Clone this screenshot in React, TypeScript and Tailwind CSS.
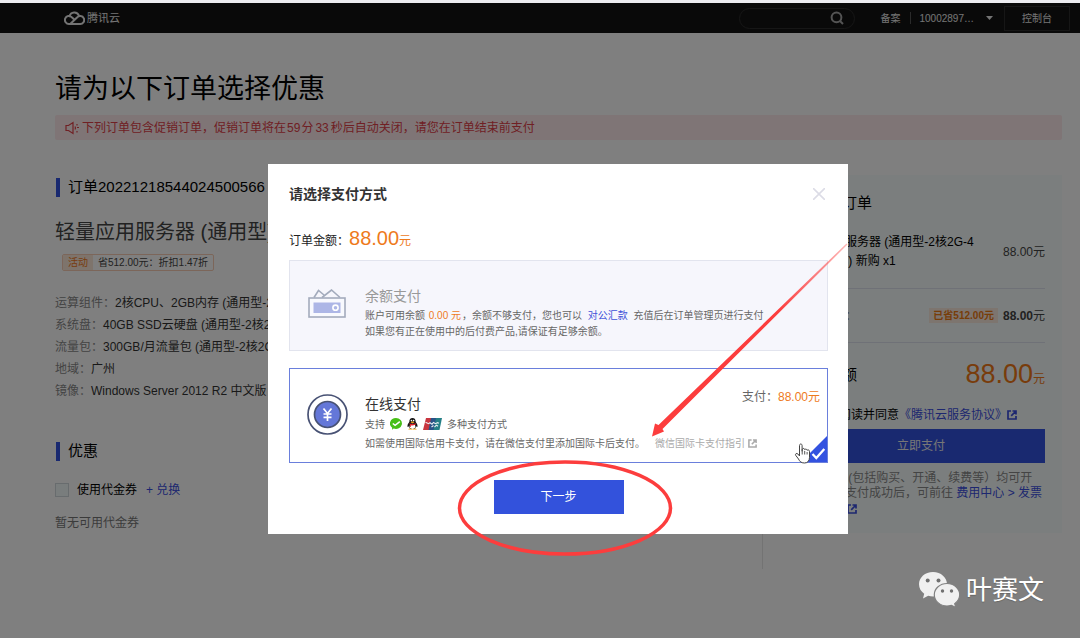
import { useState } from "react";

const specs = [
  { label: "运算组件：", value: "2核CPU、2GB内存 (通用型-2核2G)" },
  { label: "系统盘：", value: "40GB SSD云硬盘 (通用型-2核2G)" },
  { label: "流量包：", value: "300GB/月流量包 (通用型-2核2G)" },
  { label: "地域：", value: "广州" },
  { label: "镜像：", value: "Windows Server 2012 R2 中文版" },
];

function ExternalIcon({ className }: { className: string }) {
  return (
    <svg className={className} viewBox="0 0 10 10" fill="none" stroke="currentColor" strokeWidth="1.7">
      <path d="M4 1H1v8h8V6M5.500 1H9v3.500M9 1L4.200 5.800" />
    </svg>
  );
}

function Header() {
  return (
    <header className="bg-[#131313] h-[30px] pl-16 pr-[10px] flex items-center justify-between text-[10px] text-[#e8e8e8]">
      <a href="#" className="flex items-center gap-0.5 text-[11px]">
        <svg className="w-[21px] h-4" viewBox="0 0 21 16" fill="none" stroke="currentColor" strokeWidth="2" strokeLinecap="round">
          <path d="M5.500 6.200A5 5 0 0 1 15 5.600" />
          <path d="M11 14H5A4 4 0 1 1 7.800 7.200L10 9.200" />
          <path d="M6.200 14L13 7.600A4 4 0 1 1 16 14H6.200" />
        </svg>
        腾讯云
      </a>
      <div className="flex items-center">
        <div className="w-[116px] h-[21px] px-2 border border-[#2c2c2c] rounded-full flex items-center">
          <input type="search" aria-label="搜索" className="w-[82px] bg-transparent outline-none" />
          <svg className="w-[14px] h-[14px] text-[#a8a8a8]" viewBox="0 0 14 14" fill="none" stroke="currentColor" strokeWidth="2">
            <circle cx="6.500" cy="6.300" r="4.900" />
            <path d="M10 10l3 3" />
          </svg>
        </div>
        <a href="#" className="ml-[26px]">备案</a>
        <span className="w-px h-3 bg-[#555] mx-[9px]" />
        <button className="flex items-center gap-3">
          10002897…
          <svg className="w-[7px] h-1" viewBox="0 0 7 4" fill="currentColor">
            <path d="M0 0h7L3.500 4z" />
          </svg>
        </button>
        <button className="ml-[11px] w-[66px] h-[25px] border border-[#2c2c2c]">控制台</button>
      </div>
    </header>
  );
}

function SectionTitle({ children }: { children: React.ReactNode }) {
  return (
    <h2 className="flex items-center gap-2 text-[15px] leading-[22px] pl-px">
      <span className="w-1 h-[19px] bg-[#3352e0]" />
      {children}
    </h2>
  );
}

function OrderDetails() {
  return (
    <section className="flex-1 border-r border-[#e6e6e6] pt-px pb-9">
      <SectionTitle>订单20221218544024500566</SectionTitle>
      <h3 className="mt-5 text-xl leading-7 text-[#444]">轻量应用服务器 (通用型)</h3>
      <div className="mt-2 ml-[7px] w-fit h-[17px] border border-[#f8cdb4] rounded-xs flex items-center text-[10px] text-[#444]">
        <span className="h-full px-[5px] bg-[#fde8d8] text-[#f07a1c] leading-[15px]">活动</span>
        <span className="px-[5px]">省512.00元：折扣1.47折</span>
      </div>
      <dl className="mt-[21px] text-xs">
        {specs.map((s) => (
          <div key={s.label} className="flex h-[22px] items-center">
            <dt className="text-[#888]">{s.label}</dt>
            <dd className="text-[#333]">{s.value}</dd>
          </div>
        ))}
      </dl>
      <div className="mt-[38px]">
        <SectionTitle>优惠</SectionTitle>
      </div>
      <div className="mt-[18px] h-5 flex items-center text-xs">
        <label className="flex items-center gap-2">
          <input type="checkbox" className="appearance-none w-[14px] h-[14px] border border-[#d0d8dc] bg-[#f3fafa]" />
          使用代金券
        </label>
        <a href="#" className="ml-[9px] text-[#3b4fe0]">+ 兑换</a>
      </div>
      <p className="mt-[13px] text-xs leading-5 text-[#777]">暂无可用代金券</p>
    </section>
  );
}

function OrderSummary() {
  return (
    <aside className="w-[282px] ml-[17px] self-start bg-[#f7fdfc] px-[17px] pt-[18px] pb-[17px] text-xs">
      <h2 className="text-[15px] leading-5">待支付订单</h2>
      <div className="mt-5 pb-[17px] flex items-center justify-between border-b border-[#dfe2ee]">
        <p className="leading-[19px]">
          轻量应用服务器 (通用型-2核2G-4
          <br />
          M-300GB) 新购 x1
        </p>
        <span className="text-[#444]">88.00元</span>
      </div>
      <div className="h-[54px] flex items-center border-b border-[#dfe2ee]">
        <span className="text-[#888]">优惠合计：</span>
        <span className="ml-auto mr-[5px] px-1 bg-[#fbeadf] text-[10px] leading-[15px] font-bold text-[#ee7a10]">已省512.00元</span>
        <span className="text-[#444]">
          <b>88.00</b>元
        </span>
      </div>
      <div className="mt-3 h-10 flex items-center justify-between">
        <span className="text-[15px]">费用总额</span>
        <span className="text-[#f07816]">
          <span className="text-[27px]">88.00</span>元
        </span>
      </div>
      <div className="mt-[10px] h-5 flex items-center whitespace-nowrap">
        <label className="flex items-center gap-1">
          <input type="checkbox" defaultChecked className="w-[14px] h-[14px]" />
          我已阅读并同意
        </label>
        <a href="#" className="flex items-center text-[#3b4fe0]">
          《腾讯云服务协议》
          <ExternalIcon className="w-[10px] h-[10px]" />
        </a>
      </div>
      <button className="mt-1 w-full h-[34px] bg-[#3352e0] text-[#eee]">立即支付</button>
      <p className="mt-2 leading-[15px] text-[#888] whitespace-nowrap">
        所有费用 (包括购买、开通、续费等）均可开
        <br />
        发票，在支付成功后，可前往{" "}
        <a href="#" className="text-[#3b4fe0]">
          费用中心 &gt; 发票
          <br />
          管理开具
          <ExternalIcon className="w-[10px] h-[10px] ml-0.5 inline" />
        </a>
      </p>
    </aside>
  );
}

function WalletIcon() {
  return (
    <svg className="w-[38px] h-[29px] shrink-0" viewBox="0 0 38 29" fill="none" stroke="#a3abbc" strokeWidth="1.600">
      <path d="M6 8.500L10.500 1.500L16 6M14 8.500L23.500 1L32 8.500" />
      <rect x="1" y="9" width="36" height="19" fill="#f8f9fe" />
      <rect x="5.500" y="13.500" width="27" height="10.500" fill="#adb6e6" stroke="none" />
      <circle cx="27.500" cy="18.700" r="2.600" stroke="#fff" />
    </svg>
  );
}

function CoinIcon() {
  return (
    <svg className="w-[41px] h-[41px] shrink-0" viewBox="0 0 41 41" fill="none" stroke="#485274" strokeWidth="1.700">
      <circle cx="20.500" cy="20.500" r="19.500" />
      <circle cx="20.500" cy="20.500" r="13" fill="#6477d8" />
      <path d="M16.500 14.500l4 5 4-5M20.500 19.500V27M16.500 20h8M16.500 23.300h8" stroke="#fff" />
    </svg>
  );
}

function PayLogos() {
  return (
    <>
      <svg className="w-3 h-3" viewBox="0 0 12 12">
        <path d="M6 0a6 5.500 0 1 1-2.300 10.600L2 11.800l.2-2A6 5.500 0 0 1 6 0z" fill="#46bf16" />
        <path d="M2.800 5.500l2.300 1.900 4.700-3.800" fill="none" stroke="#fff" strokeWidth="1.500" />
      </svg>
      <svg className="w-[11px] h-3" viewBox="0 0 11 12">
        <path d="M5.500 0C3.300 0 2.300 1.600 2.300 4C1 5.600.2 7 .6 9c.5.2 1-.3 1.300-.8L3 11h5l1.100-2.800c.3.500.8 1 1.300.8.4-2-.4-3.400-1.700-5C8.700 1.600 7.700 0 5.500 0z" fill="#151515" />
        <ellipse cx="5.500" cy="8.300" rx="2.800" ry="2.600" fill="#fff" />
        <circle cx="4.400" cy="2.600" r=".8" fill="#fff" />
        <circle cx="6.600" cy="2.600" r=".8" fill="#fff" />
        <ellipse cx="5.500" cy="4.200" rx="1.800" ry=".7" fill="#f5a51b" />
        <path d="M2.200 5.200q3.300 1.600 6.600 0v1.300q-3.300 1.500-5 .8V9H2.900V6.800z" fill="#e0242c" />
        <path d="M1.500 11.300q2-1.300 3.800 0zM5.700 11.300q2-1.300 3.800 0z" fill="#f5a51b" stroke="#f5a51b" strokeWidth=".4" />
      </svg>
      <svg className="w-[19px] h-3" viewBox="0 0 19 12">
        <path d="M3 0h6L6 12H0z" fill="#c8353f" />
        <path d="M8 0h6l-3 12H5.500z" fill="#2a5287" />
        <path d="M13 0h6l-2.500 12H10.500z" fill="#247f86" />
        <path d="M2.500 4.200l3 1.500 1.500-1 2 1.500 1.500-1.700 2 1.200 2-1 1.500.6M8.500 9l2-1.500M11.500 9l2-1.800 1.500 1" stroke="#e8eef2" strokeWidth="1.100" fill="none" />
      </svg>
    </>
  );
}

/* red pen marks and the mouse pointer, placed from the dialog's corner */
function Annotations() {
  return (
    <svg className="absolute top-0 left-0 w-full h-full overflow-visible pointer-events-none" aria-hidden="true">
      <defs>
        <linearGradient id="arrowFade" gradientUnits="userSpaceOnUse" x1="580" y1="78" x2="510" y2="148">
          <stop offset="0" stopColor="#fc3d3d" stopOpacity="0.350" />
          <stop offset="1" stopColor="#fc3d3d" />
        </linearGradient>
      </defs>
      <ellipse cx="297" cy="344" rx="105.500" ry="46" fill="none" stroke="#fc3d3d" strokeWidth="3.500" />
      <path d="M578.500 79.500L390.500 261L387 259.500L384 272.500L396 267.500L394.500 265L579.500 80.500Z" fill="url(#arrowFade)" />
      <g transform="translate(527 279)">
        <path
          d="M4.500 2.500c0-2 2.600-2 2.600 0v5.700l.2-2c.6-1.200 2.300-.9 2.400.4.700-.8 2.200-.6 2.400.7.700-.7 2.300-.5 2.400 1v6c0 3.500-1.800 5.700-5 5.700-3.600 0-4.700-1.600-6-4L.7 12.300c-.8-1.500 1-2.600 2.200-1.300l1.600 2z"
          fill="#fff"
          stroke="#444"
        />
        <path d="M7.200 8v3.500M9.700 8v3.500M12.100 9v2.500" stroke="#444" strokeWidth=".9" />
      </g>
    </svg>
  );
}

function PaymentDialog() {
  const [method, setMethod] = useState("online");

  return (
    <div role="dialog" aria-labelledby="pay-title" className="relative w-[580px] bg-white pl-[21px] pr-5 pt-5 pb-5 self-start text-[#222]">
      <div className="flex items-center justify-between h-5">
        <h2 id="pay-title" className="text-sm leading-5 font-bold text-[#333]">请选择支付方式</h2>
        <button aria-label="关闭" className="pr-[3px] text-[#dcdce6]">
          <svg className="w-3 h-3" viewBox="0 0 12 12" fill="none" stroke="currentColor" strokeWidth="1.600">
            <path d="M0 0l12 12M12 0L0 12" />
          </svg>
        </button>
      </div>
      <p className="mt-5 h-7 text-xs leading-7">
        订单金额：
        <span className="text-[#ee7a1c]">
          <span className="text-xl leading-7">88.00</span>元
        </span>
      </p>

      <label className="relative mt-2 h-[91px] pt-[25px] px-[18px] border border-[#e2e4ee] bg-[#f6f6fc] flex items-start gap-[19px]">
        <input type="radio" name="pay" disabled className="sr-only" />
        <span className="pt-[3px]"><WalletIcon /></span>
        <span className="text-[10px] leading-4 text-[#666] whitespace-nowrap">
          <span className="block text-sm leading-5 mb-0.5 text-[#999]">余额支付</span>
          账户可用余额 <span className="text-[#ee7a1c] mx-px">0.00 元</span>，余额不够支付，您也可以{" "}
          <a href="#" className="text-[#3d52d8] mx-[3px]">对公汇款</a> 充值后在订单管理页进行支付
          <br />
          如果您有正在使用中的后付费产品,请保证有足够余额。
        </span>
      </label>

      <label className="relative mt-[17px] h-[95px] pt-[21px] pl-[17px] pr-[7px] border border-[#6a7fdc] flex items-start gap-[17px]">
        <input type="radio" name="pay" checked={method === "online"} onChange={() => setMethod("online")} className="sr-only" />
        <span className="pt-1"><CoinIcon /></span>
        <span className="flex-1 text-[10px] text-[#666]">
          <span className="flex items-start justify-between">
            <span className="mt-1 text-sm leading-5 text-[#333]">在线支付</span>
            <span className="text-xs leading-[14px]">
              支付：<span className="text-[#ee7a1c]">88.00元</span>
            </span>
          </span>
          <span className="mt-0.5 h-4 flex items-center gap-[5px]">
            支持 <PayLogos /> 多种支付方式
          </span>
          <span className="mt-[3px] h-4 flex items-center gap-[10px] whitespace-nowrap">
            如需使用国际信用卡支付，请在微信支付里添加国际卡后支付。
            <a href="#" className="flex items-center gap-[3px] text-[#aaa]">
              微信国际卡支付指引
              <ExternalIcon className="w-[9px] h-[9px]" />
            </a>
          </span>
        </span>
        <svg className="absolute right-0 bottom-0 w-[26px] h-[26px]" viewBox="0 0 26 26">
          <path d="M26 0v26H0z" fill="#3352e0" />
          <path d="M11.500 18l3.800 4 8-9" fill="none" stroke="#fff" strokeWidth="2.300" />
        </svg>
      </label>

      <div className="mt-[17px] flex justify-center">
        <button className="w-[130px] h-[34px] bg-[#3352dc] text-white text-xs">下一步</button>
      </div>
      <Annotations />
    </div>
  );
}

export default function App() {
  return (
    <div className="min-h-screen flex flex-col bg-white text-black font-['Liberation_Sans','Noto_Sans_CJK_SC',sans-serif]">
      <div className="h-[3px] bg-[#ececf0]" />
      <div className="relative flex-1">
        <Header />
        <main className="pl-[55px] pr-[18px] pt-[38px]">
          <h1 className="text-[27px] leading-9">请为以下订单选择优惠</h1>
          <div className="mt-2 h-[25px] px-[10px] flex items-center gap-[3px] rounded-xs bg-[#feeaed] text-xs text-[#e04048]">
            <svg className="w-[14px] h-[14px]" viewBox="0 0 14 14" fill="none" stroke="currentColor" strokeWidth="1.200">
              <path d="M1 4.500h2.500L8 1.500v11L3.500 9.500H1zM10 5.500q1 1.500 0 3M12 3v1.500M12 6.500h2M12 10v1.500" />
            </svg>
            <p>
              下列订单包含促销订单，促销订单将在<span className="mx-px">59</span>分<span className="mx-0.5">33</span>
              秒后自动关闭，请您在订单结束前支付
            </p>
          </div>
          <div className="pt-[35px] flex">
            <OrderDetails />
            <OrderSummary />
          </div>
        </main>

        <div className="absolute inset-0 bg-black/50 pl-9 pt-[131px] flex justify-center">
          <div className="pt-[30px]">
            <PaymentDialog />
          </div>
        </div>

        <div className="absolute right-9 bottom-[30px] flex items-center gap-[6px] text-[26px] leading-9 text-white text-shadow-xs">
          <svg className="w-[42px] h-[37px]" viewBox="0 0 42 37" fill="#f0f0f0">
            <path d="M15 1C7 1 1 6.500 1 13.300c0 4 2 7.200 5.200 9.500L5 27.500l5.200-2.700c1.700.5 3.200.7 4.800.7C23 25.500 29 20 29 13.300S23 1 15 1z" />
            <path d="M29 12.500c-7 0-12.700 5-12.700 11.200S22 35 29 35c1.600 0 3-.3 4.400-.7l4.500 2.300-1.200-3.900c3-2.200 5-5.300 5-9C41.700 17.500 36 12.500 29 12.500z" stroke="#808080" strokeWidth="1.200" />
            <g fill="#707070">
              <circle cx="9.700" cy="9.500" r="2" />
              <circle cx="20.500" cy="9.500" r="2" />
              <circle cx="24.500" cy="20" r="1.700" />
              <circle cx="33.500" cy="20" r="1.700" />
            </g>
          </svg>
          叶赛文
        </div>
      </div>
    </div>
  );
}
